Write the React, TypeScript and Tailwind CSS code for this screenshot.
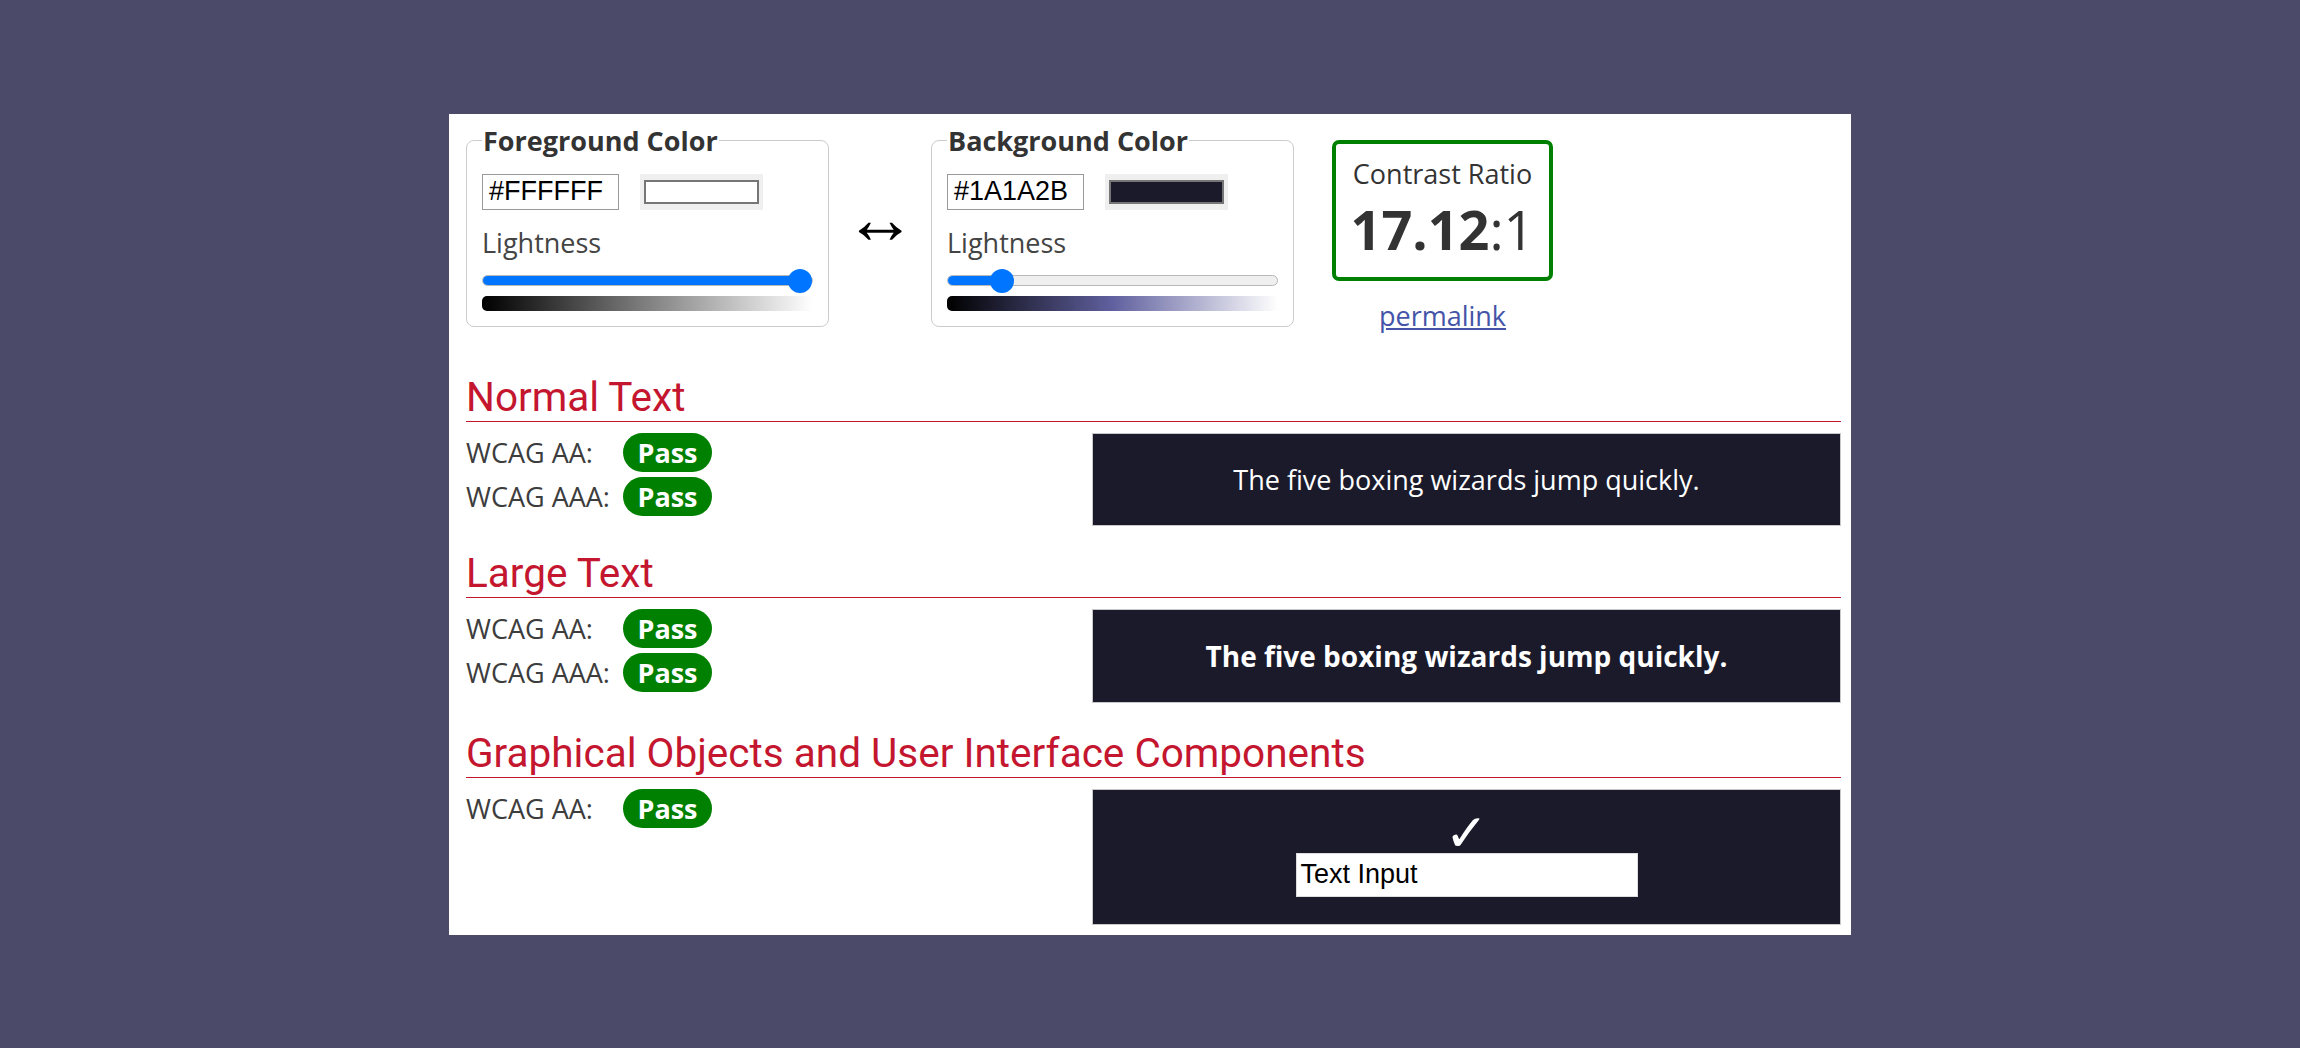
import React from "react";

type ColorFieldProps = {
  legend: string;
  hex: string;
  swatchClass: string;
  value: number;
  gradientClass: string;
};

const ColorField = ({ legend, hex, swatchClass, value, gradientClass }: ColorFieldProps) => {
  // thumb travels 306px inside a 330px track
  const thumbLeft = value * 306;

  return (
    <fieldset className="w-[363px] shrink-0 rounded-[8px] border border-[#cccccc] px-[15px] pt-[15px] pb-[15px]">
      <legend className="px-[1px] text-[27px] font-bold leading-[36px] text-[#333333]">{legend}</legend>

      <div className="flex items-center gap-[21px]">
        <div className="flex h-[36px] w-[137px] items-center border border-[#9a9a9a] px-[6px] font-['Liberation_Sans',Arial,sans-serif] text-[27px] leading-none text-black">
          {hex}
        </div>
        <div className="flex h-[36px] w-[123px] items-center justify-center bg-[#efefef]">
          <div className={`h-[24px] w-[115px] border-2 border-[#767676] ${swatchClass}`} />
        </div>
      </div>

      <div className="mt-[14px] text-[27px] leading-[37px] text-[#444444]">Lightness</div>

      {/* slider */}
      <div className="relative mt-[8px] flex h-[24px] items-center">
        <div className="h-[11px] w-full overflow-hidden rounded-full border border-[#b8b8b8] bg-[#efefef]">
          <div className="h-full bg-[#0075ff]" style={{ width: `${thumbLeft + 12}px` }} />
        </div>
        <div
          className="absolute top-0 h-[24px] w-[24px] rounded-full bg-[#0075ff]"
          style={{ left: `${thumbLeft}px` }}
        />
      </div>

      <div className={`mt-[3px] h-[15px] rounded-l-[5px] ${gradientClass}`} />
    </fieldset>
  );
};

const Pass = () => (
  <span className="flex h-[39px] w-[89px] items-center justify-center rounded-full bg-[#008000] text-[27px] font-bold leading-none text-white">
    Pass
  </span>
);

const Row = ({ label }: { label: string }) => (
  <div className="flex h-[39px] items-center">
    <span className="w-[157px] text-[27px] leading-[37px] text-[#3d3d3d]">{label}</span>
    <Pass />
  </div>
);

interface SectionProps {
  title: string;
  labels: string[];
  className?: string;
  children: React.ReactNode;
}

const Section = ({ title, labels, className, children }: SectionProps) => (
  <section className={className}>
    <h2 className="border-b border-[#c4162f] font-['Roboto',sans-serif] text-[40.5px] leading-[47px] text-[#c4162f]">
      {title}
    </h2>
    <div className="mt-[11px] flex items-start">
      <div className="flex w-[626px] shrink-0 flex-col gap-[5px]">
        {labels.map((l) => (
          <Row label={l} key={l} />
        ))}
      </div>
      <div className="flex-1 border border-[#c8c8c8] bg-[#1a1a2b] py-[27px] text-center text-white">
        {children}
      </div>
    </div>
  </section>
);

export default function App() {
  return (
    <div className="flex min-h-screen items-center justify-center bg-[#4b4a68] font-['Open_Sans',sans-serif]">
      <main className="w-[1402px] bg-white pt-[9px] pr-[10px] pb-[10px] pl-[17px] text-[#333333]">
        {/* Pickers */}
        <div className="flex items-start">
          <ColorField
            legend="Foreground Color"
            hex="#FFFFFF"
            swatchClass="bg-white"
            value={1}
            gradientClass="bg-[linear-gradient(to_right,#000000,#808080,#ffffff)]"
          />

          <div className="flex w-[102px] shrink-0 justify-center pt-[76px] font-['Liberation_Serif',serif] text-[72px] leading-[40px] text-black">
            ↔
          </div>

          <ColorField
            legend="Background Color"
            hex="#1A1A2B"
            swatchClass="bg-[#1a1a2b]"
            value={0.14}
            gradientClass="bg-[linear-gradient(to_right,#000000,#60609f,#ffffff)]"
          />

          <div className="ml-[38px] mt-[17px] flex w-[221px] flex-col items-center">
            <div className="w-full rounded-[7px] border-4 border-[#008000] py-[11px] text-center">
              <div className="text-[27px] leading-[37px] text-[#333333]">Contrast Ratio</div>
              <div className="text-[54px] leading-[74px] text-[#333333]">
                <b>17.12</b>:1
              </div>
            </div>
            <a href="#" className="mt-[16px] text-[27px] leading-[37px] text-[#4454a8] underline">
              permalink
            </a>
          </div>
        </div>

        <Section title="Normal Text" labels={["WCAG AA:", "WCAG AAA:"]} className="mt-[40px]">
          <p className="text-[27px] leading-[37px]">The five boxing wizards jump quickly.</p>
        </Section>

        <Section title="Large Text" labels={["WCAG AA:", "WCAG AAA:"]} className="mt-[24px]">
          <p className="text-[28px] font-bold leading-[38px]">The five boxing wizards jump quickly.</p>
        </Section>

        <Section
          title="Graphical Objects and User Interface Components"
          labels={["WCAG AA:"]}
          className="mt-[27px]"
        >
          <div className="h-[36px] font-['DejaVu_Sans',sans-serif] text-[52px] leading-[32px]">✓</div>
          <div className="mx-auto flex h-[44px] w-[342px] items-center border border-[#dddddd] bg-white px-[4px] text-left font-['Liberation_Sans',Arial,sans-serif] text-[27px] leading-none text-black">
            Text Input
          </div>
        </Section>
      </main>
    </div>
  );
}
